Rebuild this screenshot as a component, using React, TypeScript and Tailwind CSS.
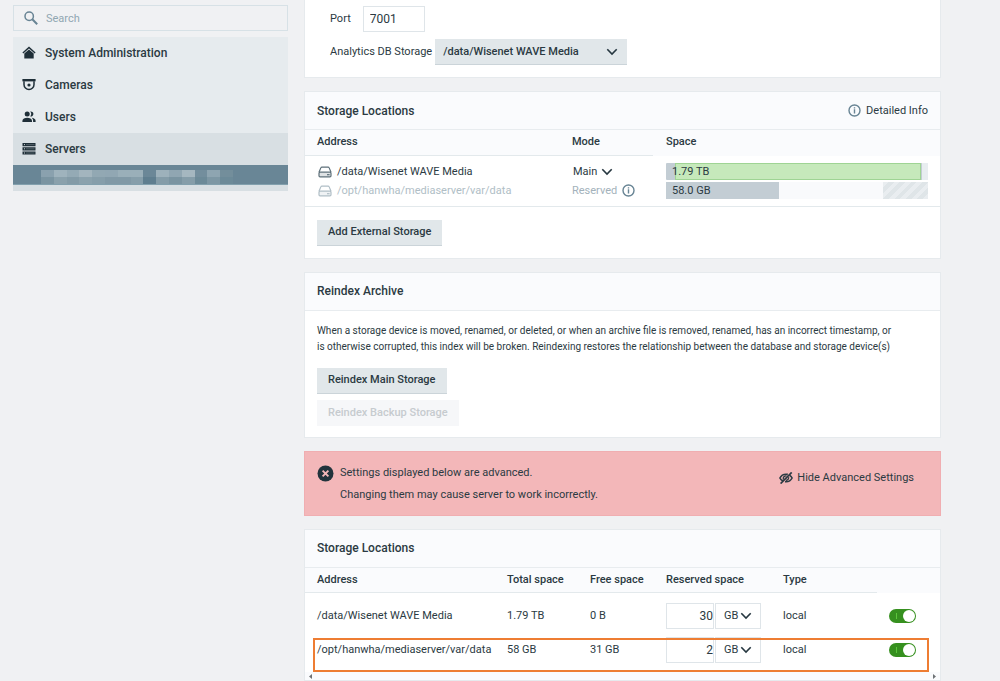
import type { ReactNode } from "react";

function Card({ title, action, children }: { title: string; action?: ReactNode; children: ReactNode }) {
  return (
    <section className="border border-[#e6eaed] bg-white">
      <header className="flex h-[38px] items-center justify-between border-b border-[#e8ecef] bg-[#fafbfd] px-3">
        <h2 className="text-[12px] font-medium">{title}</h2>
        {action}
      </header>
      {children}
    </section>
  );
}

function Chevron({ className = "" }: { className?: string }) {
  return (
    <svg className={className} width="12" height="8" viewBox="0 0 12 8" fill="none" stroke="#263740" strokeWidth="1.6" aria-hidden="true">
      <path d="M1.3 1.2 6 6l4.700-4.800" />
    </svg>
  );
}

function InfoIcon() {
  return (
    <svg width="13" height="13" viewBox="0 0 13 13" fill="none" stroke="#688494" aria-hidden="true">
      <circle cx="6.500" cy="6.500" r="5.500" strokeWidth="1.400" />
      <path d="M6.500 5.300v4.200M6.500 3.200v1.300" strokeWidth="1.400" />
    </svg>
  );
}

function DriveIcon({ color }: { color: string }) {
  return (
    <svg width="14" height="12" viewBox="0 0 14 12" fill="none" stroke={color} strokeWidth="1.200" aria-hidden="true">
      <path d="M1 6.200 2.800 1.900Q3.100 1.100 4 1.100h6q.9 0 1.200.8L13 6.200" />
      <rect x="1" y="6.200" width="12" height="4.600" rx="1" fill={color} fillOpacity=".2" />
      <path d="M9 8.700h2.600" />
    </svg>
  );
}

const icons: Record<string, ReactNode> = {
  home: (
    <>
      <path d="M7 .6.4 6.600l.9.9L7 2.400l5.700 5.100.9-.9L7 .6z" />
      <path d="M7 3.400 2.300 7.600V12.500h9.400V7.600z" />
    </>
  ),
  camera: (
    <>
      <path d="M.4 1h13.200v2.400H.4z" />
      <path d="M2 3.200v3.300a5 5 0 0 0 10 0V3.200" fill="none" stroke="#1f2f38" strokeWidth="1.500" />
      <circle cx="7" cy="7" r="1.600" />
    </>
  ),
  users: (
    <>
      <circle cx="5.200" cy="4" r="2.500" />
      <path d="M8.200 1.600a2.500 2.500 0 1 1 0 4.800 3.600 3.600 0 0 0 0-4.800z" />
      <path d="M.4 12v-1.300C.4 8.700 3 7.700 5.200 7.700s4.800 1 4.800 3V12z" />
      <path d="M9.600 7.800c2 .2 4 1.200 4 2.900V12h-2.500v-1.300c0-1.200-.6-2.200-1.500-2.900z" />
    </>
  ),
  servers: (
    <>
      <path d="M.5 1h13v3.200H.5zM.5 5.200h13v3.200H.5zM.5 9.400h13v3.200H.5z" />
      <path d="M2 2.600h1M2 6.800h1M2 11h1" stroke="#c7d0d4" strokeWidth="1" />
      <path d="M4 2.600h8.500M4 6.800h8.500M4 11h8.500" stroke="#7f8c93" strokeWidth=".5" />
    </>
  ),
};

const navItems = [
  { label: "System Administration", icon: "home" },
  { label: "Cameras", icon: "camera" },
  { label: "Users", icon: "users" },
];

function NavLink({ label, icon }: { label: string; icon: string }) {
  return (
    <a href="#" className="flex h-8 items-center gap-[9px] pl-[9px] text-[12px] font-medium">
      <svg width="14" height="14" viewBox="0 0 14 14" fill="#1f2f38" aria-hidden="true">
        {icons[icon]}
      </svg>
      {label}
    </a>
  );
}

const mosaicTop = ["#8aa1ae", "#9fb3bd", "#94aab5", "#a3b5be", "#92a8b3", "#91a7b3", "#9aafb9", "#9aafb9", "#6b8797", "#9db1bb", "#90a6b2", "#a5b7c0", "#738e9d", "#8ea5b1", "#738e9b"];
const mosaicBottom = ["#7a94a1", "#8aa1ac", "#839ba7", "#8ba2ad", "#869eaa", "#8199a6", "#8199a6", "#869eaa", "#5f7e8f", "#849ca8", "#7a94a1", "#859da9", "#6c8a98", "#7d97a4", "#6c8a98"];

function UnitSelect({ label }: { label: string }) {
  return (
    <span className="relative ml-px inline-flex">
      <select aria-label={label} defaultValue="GB" className="h-[26px] w-[46px] appearance-none border border-[#dfe5e9] bg-transparent pl-2 text-[11px]">
        <option>GB</option>
        <option>TB</option>
      </select>
      <Chevron className="pointer-events-none absolute top-[9px] right-[9px]" />
    </span>
  );
}

const locations = [
  { address: "/data/Wisenet WAVE Media", total: "1.79 TB", free: "0 B", reserved: "30", type: "local", pad: "pt-[10px] pb-1" },
  { address: "/opt/hanwha/mediaserver/var/data", total: "58 GB", free: "31 GB", reserved: "2", type: "local", pad: "pt-1 pb-[9px]" },
];

const buttonStyle = "h-[26px] border-b border-[#cbd4d9] bg-[#e1e7ea] px-[11px] text-[11px] font-medium";
const headCell = "h-[25px] border-b text-left text-[11px] font-medium";

export default function App() {
  return (
    <div className="flex min-h-screen items-start gap-4 bg-[#f0f1f3] pr-[59px] pl-[13px] font-[Roboto,sans-serif] text-[11px] leading-[18px] text-[#2b3a42]">
      <aside className="w-[275px] shrink-0 pt-[5px]">
        <label className="flex h-[26px] items-center gap-2 border border-[#d7e1e6] pl-[10px]">
          <svg width="14" height="14" viewBox="0 0 14 14" fill="none" stroke="#688494" aria-hidden="true">
            <circle cx="5.200" cy="5.200" r="4.200" strokeWidth="1.500" />
            <path d="m8.300 8.300 4.900 4.900" strokeWidth="2" />
          </svg>
          <input type="text" aria-label="Search" placeholder="Search" className="min-w-0 flex-1 bg-transparent pt-[2px] text-[11px] outline-none placeholder:text-[#91a7b2]" />
        </label>
        <nav className="mt-[6px] bg-[#e6ebee]">
          {navItems.map((item) => (
            <NavLink key={item.label} {...item} />
          ))}
          <div className="bg-[#d8dfe3] pb-[6px]">
            <NavLink label="Servers" icon="servers" />
            <a href="#" aria-label="Selected server" className="flex h-5 items-end border-b border-[#82a0ad] bg-[#698696] pl-7">
              <svg width="192" height="14" viewBox="0 0 15 2" preserveAspectRatio="none" shapeRendering="crispEdges" aria-hidden="true">
                {mosaicTop.map((fill, i) => (
                  <rect key={i} x={i} width="1" height="1" fill={fill} />
                ))}
                {mosaicBottom.map((fill, i) => (
                  <rect key={i} x={i} y="1" width="1" height="1" fill={fill} />
                ))}
              </svg>
            </a>
          </div>
        </nav>
      </aside>

      <main className="flex min-w-0 flex-1 flex-col gap-[13px]">
        <section className="flex flex-col gap-[7px] border border-t-0 border-[#e6eaed] bg-white pt-[6px] pb-3 pl-[25px]">
          <div className="flex items-center gap-3">
            <label htmlFor="port">Port</label>
            <input id="port" type="text" defaultValue="7001" className="h-[26px] w-[62px] border border-[#dfe5e9] px-[6px] text-[12px]" />
          </div>
          <div className="flex items-center gap-[3px]">
            <label htmlFor="analytics">Analytics DB Storage</label>
            <span className="relative inline-flex">
              <select id="analytics" className="h-[26px] w-[192px] appearance-none border-b border-[#cbd4d9] bg-[#e1e7ea] pl-2 text-[11px] font-medium">
                <option>/data/Wisenet WAVE Media</option>
              </select>
              <Chevron className="pointer-events-none absolute top-[9px] right-[9px]" />
            </span>
          </div>
        </section>

        <Card
          title="Storage Locations"
          action={
            <button type="button" className="flex items-center gap-[5px] text-[11px]">
              <InfoIcon />
              Detailed Info
            </button>
          }
        >
          <table className="w-full table-fixed">
            <colgroup>
              <col className="w-[267px]" />
              <col className="w-[81px]" />
              <col />
            </colgroup>
            <thead className="bg-[#fafbfd]">
              <tr>
                <th className={`${headCell} border-[#e3e9ec] pl-3`}>Address</th>
                <th className={`${headCell} border-[#e3e9ec]`}>Mode</th>
                <th className={`${headCell} border-[#fafbfd] pl-[13px]`}>Space</th>
              </tr>
            </thead>
            <tbody>
              <tr>
                <td className="pt-[7px] pl-[13px]">
                  <span className="flex items-center gap-[5px]">
                    <DriveIcon color="#5d6f79" />
                    /data/Wisenet WAVE Media
                  </span>
                </td>
                <td className="pt-[7px]">
                  <button type="button" className="flex items-center gap-1 pl-px">
                    Main
                    <Chevron />
                  </button>
                </td>
                <td className="pt-[7px] pr-3 pl-[13px]">
                  <div className="relative flex h-[17px] items-center gap-px rounded-[1px] bg-[#c3cdd4] pl-[9px]">
                    <div className="h-full flex-1 border border-[#9fd494] bg-[#c6e9bb]" />
                    <div className="h-full w-[6px] bg-[#e8edf0]" />
                    <span className="absolute left-[6px] leading-[17px]">1.79 TB</span>
                  </div>
                </td>
              </tr>
              <tr>
                <td className="pt-px pb-[6px] pl-[13px] text-[#b0bec6]">
                  <span className="flex items-center gap-[5px]">
                    <DriveIcon color="#b0bec6" />
                    /opt/hanwha/mediaserver/var/data
                  </span>
                </td>
                <td className="pt-px pb-[6px] text-[#a3b2bb]">
                  <span className="flex items-center gap-[5px]">
                    Reserved
                    <InfoIcon />
                  </span>
                </td>
                <td className="pt-px pr-3 pb-[6px] pl-[13px]">
                  <div className="flex h-[17px] justify-between rounded-[1px] bg-[#f9fafc]">
                    <div className="w-[43%] bg-[#c3cdd4] pl-[6px] leading-[17px]">58.0 GB</div>
                    <div className="w-[17%] bg-[repeating-linear-gradient(135deg,#e9edf0_0px,#e9edf0_4px,#dfe5e8_4px,#dfe5e8_8px)]" />
                  </div>
                </td>
              </tr>
            </tbody>
          </table>
          <div className="border-t border-[#e3e9ec] px-3 pt-[13px] pb-3">
            <button type="button" className={buttonStyle}>Add External Storage</button>
          </div>
        </Card>

        <Card title="Reindex Archive">
          <div className="flex flex-col items-start px-3 pt-3 pb-[11px]">
            <p className="text-[10px] leading-4">
              When a storage device is moved, renamed, or deleted, or when an archive file is removed, renamed, has an incorrect timestamp, or
              <br />
              is otherwise corrupted, this index will be broken. Reindexing restores the relationship between the database and storage device(s)
            </p>
            <button type="button" className={`${buttonStyle} mt-[13px]`}>Reindex Main Storage</button>
            <button type="button" disabled className="mt-[6px] h-[26px] bg-[#f6f7f9] px-[11px] text-[11px] font-medium text-[#c6cbcf]">
              Reindex Backup Storage
            </button>
          </div>
        </Card>

        <section role="alert" className="flex h-[65px] items-center justify-between border border-[#f0aeb1] bg-[#f3b7b9] pr-[26px] pl-3">
          <div className="flex gap-[6px] pt-[2px]">
            <svg className="mt-[3px]" width="17" height="17" viewBox="0 0 17 17" aria-hidden="true">
              <circle cx="8.500" cy="8.500" r="8" fill="#22333c" />
              <path d="m5.600 5.600 5.800 5.800m0-5.800-5.800 5.800" stroke="#f3b7b9" strokeWidth="1.900" />
            </svg>
            <div className="leading-[22px]">
              <p>Settings displayed below are advanced.</p>
              <p>Changing them may cause server to work incorrectly.</p>
            </div>
          </div>
          <button type="button" className="flex items-center gap-1 pb-[10px]">
            <svg width="14" height="12" viewBox="0 0 14 12" fill="none" stroke="#2b3a42" aria-hidden="true">
              <path d="M4 9C2.600 8.300 1.500 7.300.9 6 2.100 3.600 4.300 2.200 7 2.200q1 0 1.800.2M10.500 3.200C11.700 3.900 12.600 4.800 13.100 6 11.900 8.400 9.700 9.800 7 9.800l-1-.1" strokeWidth="1.600" />
              <path d="M4.400 7.500C3.700 5.400 5.400 3.600 7.500 3.900M9.600 5.200c.3 1.700-1 3.300-2.800 3.200" strokeWidth="1.300" />
              <path d="M12.700.4 1.600 11.600" strokeWidth="1.700" />
            </svg>
            Hide Advanced Settings
          </button>
        </section>

        <Card title="Storage Locations">
          <div className="relative">
            <table className="w-full table-fixed">
              <colgroup>
                <col />
                <col className="w-[83px]" />
                <col className="w-[76px]" />
                <col className="w-[117px]" />
                <col className="w-[94px]" />
                <col className="w-[63px]" />
              </colgroup>
              <thead className="bg-[#fafbfd]">
                <tr>
                  <th className={`${headCell} border-[#e3e9ec] pl-3`}>Address</th>
                  {["Total space", "Free space", "Reserved space", "Type"].map((head) => (
                    <th key={head} className={`${headCell} border-[#e3e9ec]`}>{head}</th>
                  ))}
                  <th aria-label="Enabled" />
                </tr>
              </thead>
              <tbody>
                {locations.map((row) => (
                  <tr key={row.address}>
                    <td className={`${row.pad} pl-3`}>{row.address}</td>
                    <td className={row.pad}>{row.total}</td>
                    <td className={row.pad}>{row.free}</td>
                    <td className={row.pad}>
                      <span className="flex h-[26px] items-center">
                        <input
                          type="text"
                          aria-label={`Reserved space for ${row.address}`}
                          defaultValue={row.reserved}
                          className="h-[26px] w-12 border border-[#dfe5e9] bg-transparent text-right text-[12px]"
                        />
                        <UnitSelect label={`Unit for ${row.address}`} />
                      </span>
                    </td>
                    <td className={row.pad}>{row.type}</td>
                    <td className={`${row.pad} pl-3`}>
                      <input
                        type="checkbox"
                        role="switch"
                        aria-label={`Use ${row.address}`}
                        defaultChecked
                        className="relative block h-[14px] w-[27px] appearance-none rounded-full bg-[#36901f] before:absolute before:top-[4px] before:left-[7px] before:h-[6px] before:w-px before:bg-[#5cc63c] after:absolute after:top-px after:right-px after:size-3 after:rounded-full after:bg-white"
                      />
                    </td>
                  </tr>
                ))}
              </tbody>
            </table>
            <div className="pointer-events-none absolute right-[11px] bottom-0 left-2 h-[34px] border-[2px] border-[#ee7d33]" />
          </div>
          <div className="flex h-2 items-center justify-between bg-[#fafbfd] px-1" aria-hidden="true">
            <svg width="3" height="5" viewBox="0 0 3 5" fill="#6d7275"><path d="M3 0v5L0 2.500z" /></svg>
            <svg width="3" height="5" viewBox="0 0 3 5" fill="#6d7275"><path d="M0 0v5l3-2.500z" /></svg>
          </div>
        </Card>
      </main>
    </div>
  );
}
